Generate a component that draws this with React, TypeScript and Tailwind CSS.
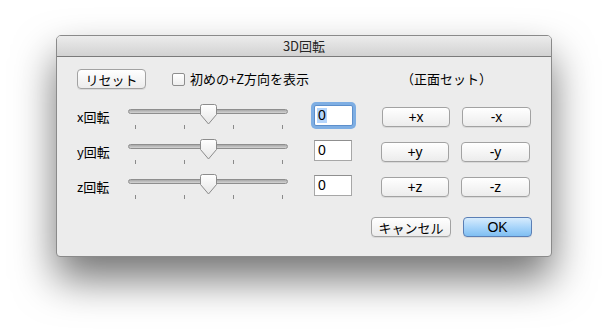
import React from "react";

const jp = { fontFamily: '"Noto Sans CJK JP", "Liberation Sans", sans-serif' };
const lat = { fontFamily: '"Liberation Sans", "Noto Sans CJK JP", sans-serif' };

function Btn({ children, w, primary }: { children: React.ReactNode; w: string; primary?: boolean }) {
  return (
    <div
      className={`${w} h-[20px] flex items-center justify-center rounded-[4px] border text-[13px] leading-none text-black ${
        primary
          ? "border-[#5b7fb5] bg-gradient-to-b from-[#d7ecfd] via-[#a9d5fa] to-[#7fbff2]"
          : "border-[#a2a2a2] bg-gradient-to-b from-[#ffffff] to-[#ececec]"
      } shadow-[0_1px_0_rgba(0,0,0,0.08)]`}
      style={jp}
    >
      {children}
    </div>
  );
}

function Slider() {
  return (
    <div className="relative w-[160px] h-[25px]">
      <div className="absolute left-0 right-0 top-[4px] h-[5px] rounded-full border border-[#8e8e8e] bg-gradient-to-b from-[#a8a8a8] to-[#d4d4d4]" />
      <div className="absolute left-[7px] top-[20px] w-px h-[4px] bg-[#8a8a8a]" />
      <div className="absolute left-[56px] top-[20px] w-px h-[4px] bg-[#8a8a8a]" />
      <div className="absolute left-[105px] top-[20px] w-px h-[4px] bg-[#8a8a8a]" />
      <div className="absolute left-[154px] top-[20px] w-px h-[4px] bg-[#8a8a8a]" />
      <svg className="absolute left-[72px] top-[-1px]" width="17" height="21" viewBox="0 0 17 21">
        <defs>
          <linearGradient id="tg" x1="0" y1="0" x2="0" y2="1">
            <stop offset="0" stopColor="#ffffff" />
            <stop offset="1" stopColor="#e6e6e6" />
          </linearGradient>
        </defs>
        <path d="M2.5 0.5 H14.5 Q16.5 0.5 16.5 2.5 V10.5 L8.5 20 L0.5 10.5 V2.5 Q0.5 0.5 2.5 0.5 Z" fill="url(#tg)" stroke="#8c8c8c" strokeWidth="1" />
      </svg>
    </div>
  );
}

function Row({ axis, focused }: { axis: string; focused?: boolean }) {
  return (
    <div className="flex items-start h-[35px]">
      <div className="w-[51px] text-[13px] leading-[21px] mt-[1px] text-black" style={jp}>
        {axis}回転
      </div>
      <Slider />
      <div className="ml-[26px]">
        {focused ? (
          <div className="w-[39px] h-[21px] rounded-[2px] shadow-[0_0_0_3px_#7eaee3] border border-[#5d8fcb] bg-white flex items-center pl-[2px]">
            <span className="bg-[#b5d5fb] text-[14px] leading-[15px] px-px" style={lat}>0</span>
          </div>
        ) : (
          <div className="w-[38px] h-[21px] border border-[#a7a7a7] border-t-[#8f8f8f] bg-white flex items-center pl-[3px] text-[14px]" style={lat}>
            0
          </div>
        )}
      </div>
      <div className="ml-[29px] mt-[2px] flex gap-[12px]">
        <Btn w="w-[68px]">
          <span className="text-[14px]" style={lat}>+{axis}</span>
        </Btn>
        <Btn w="w-[69px]">
          <span className="text-[14px]" style={lat}>-{axis}</span>
        </Btn>
      </div>
    </div>
  );
}

export default function App() {
  return (
    <div className="w-[609px] h-[336px] bg-white pt-[35px] pl-[56px] overflow-hidden">
      <div className="w-[496px] h-[222px] rounded-t-[5px] rounded-b-[4px] bg-[#ececec] border border-[#8a8a8a] shadow-[0_22px_42px_rgba(0,0,0,0.55)] flex flex-col overflow-hidden">
        <div className="h-[21px] shrink-0 bg-gradient-to-b from-[#ececec] to-[#d2d2d2] border-b border-[#7a7a7a] flex items-center justify-center text-[13px] text-[#262626]" style={jp}>
          3D回転
        </div>
        <div className="flex flex-col pl-[20px] pt-[12px]">
          <div className="flex items-center h-[20px]">
            <Btn w="w-[69px]">リセット</Btn>
            <div className="ml-[26px] w-[13px] h-[13px] rounded-[2px] border border-[#8e8e8e] bg-gradient-to-b from-white to-[#eeeeee]" />
            <div className="ml-[5px] text-[13px] text-black" style={jp}>初めの+Z方向を表示</div>
            <div className="ml-[92px] text-[13px] text-black" style={jp}>（正面セット）</div>
          </div>
          <div className="mt-[16px] flex flex-col">
            <Row axis="x" focused />
            <Row axis="y" />
            <Row axis="z" />
          </div>
          <div className="mt-[7px] flex justify-end gap-[12px] pr-[19px]">
            <Btn w="w-[80px]">キャンセル</Btn>
            <Btn w="w-[69px]" primary>
              <span className="text-[14px]" style={lat}>OK</span>
            </Btn>
          </div>
        </div>
      </div>
    </div>
  );
}
